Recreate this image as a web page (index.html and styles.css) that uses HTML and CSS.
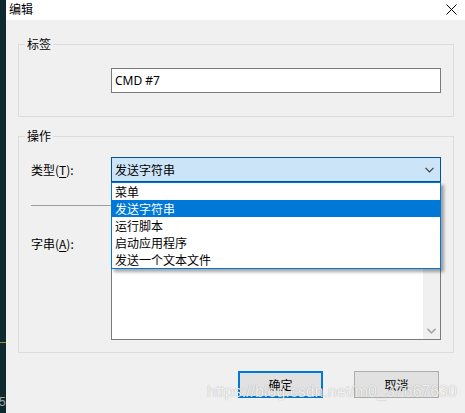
FILE: index.html
```html
<!DOCTYPE html>
<html lang="zh-CN">
<head>
<meta charset="utf-8">
<title>编辑</title>
<link rel="stylesheet" href="styles.css">
</head>
<body>
<div class="screen">
  <div class="strip">
    <div class="strip-line"></div>
    <div class="strip-glyph">5</div>
  </div>
  <div class="dialog">
    <div class="titlebar">
      <span class="title">编辑</span>
      <svg class="close" width="11" height="11" viewBox="0 0 11 11"><path d="M0.5 0.5 L10.5 10.5 M10.5 0.5 L0.5 10.5" stroke="#000" stroke-width="1" fill="none"/></svg>
    </div>
    <div class="body">
      <fieldset class="group">
        <legend class="legend">标签</legend>
        <div class="group-inner g1">
          <div class="field">CMD #7</div>
        </div>
      </fieldset>
      <fieldset class="group g2-box">
        <legend class="legend">操作</legend>
        <div class="group-inner g2">
          <div class="row type-row">
            <div class="label">类型(<u>T</u>):</div>
            <div class="combo-wrap">
              <div class="combo">
                <span>发送字符串</span>
                <svg class="arrow" width="9" height="6" viewBox="0 0 9 6"><path d="M0.5 0.8 L4.5 4.8 L8.5 0.8" stroke="#404040" stroke-width="1.2" fill="none"/></svg>
              </div>
              <div class="dropdown">
                <div class="item">菜单</div>
                <div class="item selected">发送字符串</div>
                <div class="item">运行脚本</div>
                <div class="item">启动应用程序</div>
                <div class="item">发送一个文本文件</div>
              </div>
            </div>
          </div>
          <div class="sep"></div>
          <div class="row str-row">
            <div class="label str-label">字串(<u>A</u>):</div>
            <div class="textarea">
              <div class="vscroll">
                <svg class="sarrow" width="9" height="6" viewBox="0 0 9 6"><path d="M0.5 0.8 L4.5 4.8 L8.5 0.8" stroke="#a6a6a6" stroke-width="1.6" fill="none"/></svg>
              </div>
            </div>
          </div>
        </div>
      </fieldset>
      <div class="buttons">
        <div class="btn default">确定</div>
        <div class="btn">取消</div>
      </div>
    </div>
    <div class="watermark">https://blog.csdn.net/m0_37667630</div>
  </div>
</div>
</body>
</html>
```
FILE: styles.css
```css
html, body {
  margin: 0;
  padding: 0;
  background: #f0f0f0;
}
body {
  font-family: "Noto Sans", "Noto Sans CJK SC", sans-serif;
  font-size: 12px;
  color: #000;
}
.screen {
  display: flex;
  width: 465px;
  height: 413px;
  overflow: hidden;
}
.strip {
  width: 6px;
  flex: none;
  background: #0f2a2f;
  display: flex;
  flex-direction: column;
  overflow: hidden;
}
.strip-line {
  margin-top: 342px;
  height: 1px;
  background: #9a9430;
}
.strip-glyph {
  margin-top: auto;
  margin-bottom: 4px;
  margin-left: -1px;
  color: #9aa6a8;
  font-family: "Liberation Sans", sans-serif;
  font-size: 12px;
  line-height: 14px;
}
.dialog {
  flex: 1;
  position: relative;
  background: #f0f0f0;
}
.titlebar {
  height: 20px;
  background: #fff;
  display: flex;
  align-items: center;
  justify-content: space-between;
  padding: 0 8px 0 3px;
}
.title {
  font-family: "Noto Sans CJK SC", sans-serif;
  font-size: 12px;
  line-height: 20px;
  margin-top: -2px;
}
.close {
  margin-top: -1px;
}
.body {
  padding-top: 16px;
}
.group {
  margin: 0 11px 0 12px;
  padding: 0;
  border: 1px solid #dcdcdc;
  min-width: 0;
}
.g2-box {
  margin-top: 11px;
}
.legend {
  margin-left: 6px;
  padding: 0 2px;
  line-height: 16px;
  font-family: "Noto Sans CJK SC", sans-serif;
  font-size: 12px;
}
.group-inner {
  padding-left: 12px;
  padding-right: 12px;
}
.g1 {
  padding: 16px 12px 23px 92px;
}
.g2 {
  padding-top: 13px;
  padding-bottom: 12px;
}
.field {
  height: 23px;
  border: 1px solid #7a7a7a;
  background: #fff;
  padding-left: 3px;
  line-height: 23px;
  font-size: 12px;
}
.row {
  display: flex;
}
.type-row {
  align-items: center;
}
.label {
  width: 80px;
  flex: none;
  line-height: 16px;
  font-family: "Noto Sans CJK SC", sans-serif;
}
.label u {
  text-underline-offset: 2px;
}
.str-label {
  margin-top: 8px;
  align-self: flex-start;
}
.combo-wrap {
  flex: 1;
  position: relative;
}
.combo {
  height: 23px;
  border: 1px solid #005499;
  background: #cce4f7;
  display: flex;
  align-items: center;
  justify-content: space-between;
  padding: 0 6px 0 3px;
  font-family: "Noto Sans CJK SC", sans-serif;
}
.arrow {
  margin-top: 1px;
}
.dropdown {
  position: absolute;
  top: 25px;
  left: 0;
  right: 0;
  border: 1px solid #0078d7;
  background: #fff;
  box-shadow: 3px 3px 3px rgba(0, 0, 0, 0.35);
  z-index: 2;
  font-family: "Noto Sans CJK SC", sans-serif;
}
.item {
  height: 17px;
  line-height: 17px;
  padding-left: 3px;
}
.item.selected {
  background: #0078d7;
  color: #fff;
}
.sep {
  margin-top: 23px;
  height: 1px;
  background: #a0a0a0;
}
.str-row {
  margin-top: 22px;
}
.textarea {
  flex: 1;
  height: 110px;
  border: 1px solid #7a7a7a;
  background: #fff;
  display: flex;
  justify-content: flex-end;
}
.vscroll {
  width: 17px;
  background: #f0f0f0;
  display: flex;
  flex-direction: column;
  justify-content: flex-end;
  align-items: center;
}
.sarrow {
  margin-bottom: 5px;
}
.buttons {
  margin-top: 18px;
  display: flex;
  justify-content: flex-end;
  gap: 31px;
  padding-right: 26px;
}
.btn {
  width: 83px;
  height: 25px;
  border: 1px solid #adadad;
  background: #e1e1e1;
  display: flex;
  align-items: center;
  justify-content: center;
  font-family: "Noto Sans CJK SC", sans-serif;
}
.btn.default {
  width: 81px;
  height: 23px;
  border: 2px solid #0078d7;
}
.watermark {
  position: absolute;
  left: 201px;
  top: 383px;
  font-family: "Liberation Sans", sans-serif;
  font-size: 16px;
  line-height: 18px;
  color: rgba(255, 255, 255, 0.85);
  text-shadow: 0 0 1px rgba(0, 0, 0, 0.35);
  white-space: nowrap;
  z-index: 3;
}
```
